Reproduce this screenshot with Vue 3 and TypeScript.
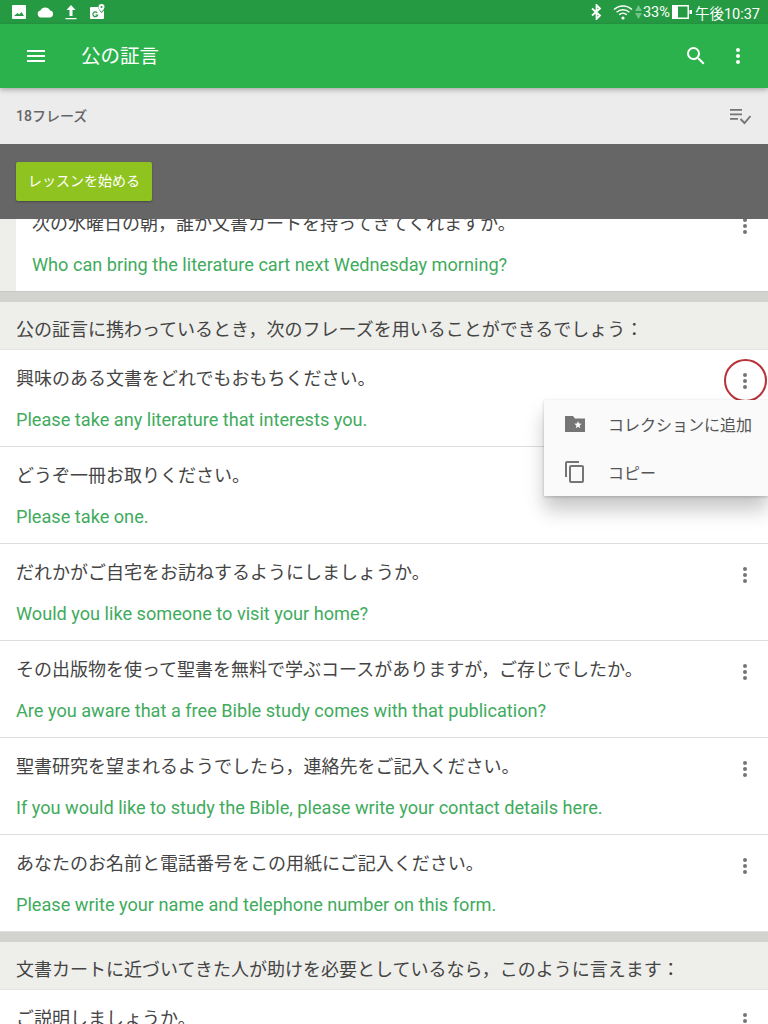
<script setup lang="ts">
interface Phrase {
  ja: string
  en: string
}

interface Section {
  title: string
  phrases: Phrase[]
}

const sections: Section[] = [
  {
    title: '公の証言に携わっているとき，次のフレーズを用いることができるでしょう：',
    phrases: [
      { ja: '興味のある文書をどれでもおもちください。', en: 'Please take any literature that interests you.' },
      { ja: 'どうぞ一冊お取りください。', en: 'Please take one.' },
      { ja: 'だれかがご自宅をお訪ねするようにしましょうか。', en: 'Would you like someone to visit your home?' },
      { ja: 'その出版物を使って聖書を無料で学ぶコースがありますが，ご存じでしたか。', en: 'Are you aware that a free Bible study comes with that publication?' },
      { ja: '聖書研究を望まれるようでしたら，連絡先をご記入ください。', en: 'If you would like to study the Bible, please write your contact details here.' },
      { ja: 'あなたのお名前と電話番号をこの用紙にご記入ください。', en: 'Please write your name and telephone number on this form.' }
    ]
  },
  {
    title: '文書カートに近づいてきた人が助けを必要としているなら，このように言えます：',
    phrases: [{ ja: 'ご説明しましょうか。', en: 'Would you like me to explain?' }]
  }
]
</script>

<template>
  <div class="app">
    <div class="status">
      <div class="status-left">
        <svg width="16" height="16" viewBox="0 0 16 16"><path fill="#fff" d="M2 1h12a1 1 0 0 1 1 1v12a1 1 0 0 1-1 1H2a1 1 0 0 1-1-1V2a1 1 0 0 1 1-1zm1 11h10l-2.6-4-2.2 2.6L6.600 9z" fill-rule="evenodd" /></svg>
        <svg width="17" height="12" viewBox="0 0 17 12"><path fill="#fff" d="M4 11.500a3.500 3.500 0 0 1-.6-6.900A5.300 5.300 0 0 1 13.100 4.600 3.500 3.500 0 0 1 13.200 11.500z" /></svg>
        <svg class="upload" width="12" height="16" viewBox="0 0 12 16"><path fill="#fff" d="M6 1l4.500 5H7.500v6h-3V6H1.500zM.5 14h11v1.200H.5z" /></svg>
        <svg class="map" width="15" height="16" viewBox="0 0 15 16">
          <path fill="#fff" d="M1 3h7.200c.3 2 1.500 4 3.300 6l2.500-2.600V14a1 1 0 0 1-1 1H1a1 1 0 0 1-1-1V4a1 1 0 0 1 1-1z" />
          <path fill="#fff" fill-rule="evenodd" d="M11.500 0A3 3 0 0 1 14.500 3c0 2-3 4.800-3 4.800S8.500 5 8.500 3a3 3 0 0 1 3-3zm0 2a1 1 0 1 0 0 2 1 1 0 0 0 0-2z" />
          <path fill="none" stroke="#259a43" stroke-width="1.200" d="M7.200 8.800a2.400 2.400 0 1 0 .4 2.200H5.400" />
        </svg>
      </div>
      <div class="status-right">
        <svg class="bt" width="11" height="16" viewBox="0 0 11 16"><path fill="none" stroke="#fff" stroke-width="1.800" d="M1 4.500l8 7L5.500 15V1L9 4.500l-8 7" /></svg>
        <svg class="wifi" width="20" height="16" viewBox="0 0 20 16"><path fill="none" stroke="#fff" stroke-width="1.500" d="M1 5.500a13 13 0 0 1 18 0M3.600 8.200a9.400 9.400 0 0 1 12.800 0M6.200 10.800a5.600 5.600 0 0 1 7.600 0" /><circle cx="10" cy="14" r="1.600" fill="#fff" /></svg>
        <svg class="updown" width="7" height="16" viewBox="0 0 7 16"><path fill="#6fc587" d="M3.500 1L7 7H0zM0 9h7l-3.500 6z" /></svg>
        <span class="pct">33%</span>
        <svg class="batt" width="20" height="14" viewBox="0 0 20 14"><path fill="#fff" d="M0 0h17v14H0zm6 1.500v11h9.500v-11zM17.500 5H20v4h-2.500z" fill-rule="evenodd" /></svg>
        <span class="clock">午後10:37</span>
      </div>
    </div>

    <header class="appbar">
      <svg class="menu-icon" width="24" height="24" viewBox="0 0 24 24"><path fill="#fff" d="M3 18h18v-2H3zm0-5h18v-2H3zm0-7v2h18V6z" /></svg>
      <h1 class="title">公の証言</h1>
      <svg class="search-icon" width="24" height="24" viewBox="0 0 24 24"><path fill="#fff" d="M15.500 14h-.79l-.28-.27A6.470 6.470 0 0 0 16 9.500 6.500 6.500 0 1 0 9.500 16c1.610 0 3.090-.59 4.230-1.570l.27.28v.79l5 4.990L20.490 19zm-6 0C7.010 14 5 11.990 5 9.500S7.010 5 9.500 5 14 7.010 14 9.500 11.990 14 9.500 14z" /></svg>
      <svg class="more-icon" width="24" height="24" viewBox="0 0 24 24"><path fill="#fff" d="M12 8a2 2 0 1 0 0-4 2 2 0 0 0 0 4zm0 2a2 2 0 1 0 0 4 2 2 0 0 0 0-4zm0 6a2 2 0 1 0 0 4 2 2 0 0 0 0-4z" /></svg>
    </header>

    <div class="subbar">
      <span class="count">18フレーズ</span>
      <svg width="24" height="24" viewBox="0 0 24 24">
        <path fill="#757575" d="M2 5h12v1.800H2zm0 4.500h12v1.800H2zM2 14h8v1.800H2z" />
        <path fill="none" stroke="#757575" stroke-width="1.900" d="M12.500 15l4 4 6-7" />
      </svg>
    </div>

    <div class="lesson-bar">
      <button class="lesson-btn">レッスンを始める</button>
    </div>

    <div class="viewport">
      <div class="list">
        <div class="phrase phrase-inset">
          <div class="phrase-text">
            <p class="ja">次の水曜日の朝，誰か文書カートを持ってきてくれますか。</p>
            <p class="en">Who can bring the literature cart next Wednesday morning?</p>
          </div>
          <svg class="kebab" width="24" height="24" viewBox="0 0 24 24"><path fill="#757575" d="M12 8a2 2 0 1 0 0-4 2 2 0 0 0 0 4zm0 2a2 2 0 1 0 0 4 2 2 0 0 0 0-4zm0 6a2 2 0 1 0 0 4 2 2 0 0 0 0-4z" /></svg>
        </div>

        <section v-for="s in sections" :key="s.title" class="section">
          <h2 class="section-title">{{ s.title }}</h2>
          <div v-for="p in s.phrases" :key="p.ja" class="phrase">
            <div class="phrase-text">
              <p class="ja">{{ p.ja }}</p>
              <p class="en">{{ p.en }}</p>
            </div>
            <svg class="kebab" width="24" height="24" viewBox="0 0 24 24"><path fill="#757575" d="M12 8a2 2 0 1 0 0-4 2 2 0 0 0 0 4zm0 2a2 2 0 1 0 0 4 2 2 0 0 0 0-4zm0 6a2 2 0 1 0 0 4 2 2 0 0 0 0-4z" /></svg>
          </div>
        </section>
      </div>

      <!-- callout round the tapped button -->
      <div class="callout"></div>

      <div class="popup">
        <div class="popup-item">
          <svg width="24" height="24" viewBox="0 0 24 24"><path fill="#757575" fill-rule="evenodd" d="M2 4h8l2 2.500h10V20H2zm13 5l-1 2.600-2.700.2 2.100 1.700-.7 2.700 2.300-1.500 2.300 1.500-.7-2.700 2.100-1.700-2.700-.2z" /></svg>
          <span>コレクションに追加</span>
        </div>
        <div class="popup-item">
          <svg width="24" height="24" viewBox="0 0 24 24"><path fill="#757575" d="M16 1H4a2 2 0 0 0-2 2v14h2V3h12zm3 4H8a2 2 0 0 0-2 2v14a2 2 0 0 0 2 2h11a2 2 0 0 0 2-2V7a2 2 0 0 0-2-2zm0 16H8V7h11z" /></svg>
          <span>コピー</span>
        </div>
      </div>
    </div>
  </div>
</template>

<style>
html,
body {
  margin: 0;
  overflow: hidden;
}
</style>

<style scoped>
.app {
  width: 768px;
  height: 1024px;
  display: flex;
  flex-direction: column;
  overflow: hidden;
  background: #fff;
  font-family: Roboto, "Noto Sans CJK JP", sans-serif;
  color: #444;
}

.status {
  height: 24px;
  flex: none;
  display: flex;
  align-items: center;
  justify-content: space-between;
  padding: 0 8px 0 11px;
  background: #259a43;
  color: #fff;
}

.status-left,
.status-right {
  display: flex;
  align-items: center;
}

.status-left {
  gap: 10px;
}

.upload {
  margin-left: 1px;
}

.map {
  margin-left: 3px;
}

.bt {
  margin-right: 11px;
}

.wifi {
  margin-right: 2px;
}

.pct {
  margin-left: 1px;
  margin-right: 2px;
  font-size: 14.500px;
}

.clock {
  font-size: 14.500px;
  margin-left: 3px;
}

.appbar {
  position: relative;
  z-index: 3;
  height: 64px;
  flex: none;
  display: flex;
  align-items: center;
  padding: 0 18px 0 24px;
  background: #2bb24c;
  box-shadow: 0 2px 5px rgba(0, 0, 0, 0.28);
  color: #fff;
}

.title {
  margin: 0 0 3px 33px;
  flex: 1;
  font-size: 19.500px;
  font-weight: 400;
}

.more-icon {
  margin-left: 18px;
}

.subbar {
  height: 56px;
  flex: none;
  display: flex;
  align-items: center;
  justify-content: space-between;
  padding: 0 16px;
  background: #ececec;
  color: #666;
  font-size: 14px;
}

.count {
  font-weight: 500;
  padding-bottom: 2px;
}

.lesson-bar {
  position: relative;
  z-index: 2;
  height: 75px;
  flex: none;
  display: flex;
  align-items: center;
  padding: 0 16px;
  background: #666;
}

.lesson-btn {
  width: 136px;
  height: 39px;
  border: 0;
  border-radius: 2px;
  background: #8fc31f;
  box-shadow: 0 1px 2px rgba(0, 0, 0, 0.3);
  color: #fff;
  font-family: inherit;
  font-size: 14px;
  padding: 0 0 3px;
}

.viewport {
  position: relative;
  flex: 1;
  overflow: hidden;
}

/* list is scrolled: first row starts under the bar */
.list {
  margin-top: -24px;
}

.phrase {
  height: 97px;
  box-sizing: border-box;
  display: flex;
  justify-content: space-between;
  padding: 16px 11px 0 16px;
  border-bottom: 1px solid #ddd;
  background: #fff;
}

.phrase-inset {
  padding-left: 32px;
  background: linear-gradient(90deg, #eeeeeb 16px, #fff 16px);
  border-bottom-color: #c9c9c5;
}

.phrase-text {
  min-width: 0;
}

.ja,
.en {
  margin: 0;
  line-height: 26px;
  white-space: nowrap;
}

.ja {
  font-size: 18px;
  color: #444;
}

.en {
  margin-top: 15px;
  font-size: 18.150px;
  color: #3fab5d;
}

.kebab {
  flex: none;
  margin-top: 3px;
}

.section {
  border-top: 10px solid #d2d3ce;
}

.section-title {
  height: 48px;
  box-sizing: border-box;
  margin: 0;
  padding: 0 16px;
  background: #eeeeeb;
  border-bottom: 1px solid #e3e3e0;
  color: #444;
  font-size: 18px;
  font-weight: 400;
  line-height: 56px;
  white-space: nowrap;
}

.callout {
  position: absolute;
  left: 724px;
  top: 140px;
  width: 39px;
  height: 39px;
  border: 2px solid #b8323a;
  border-radius: 50%;
}

.popup {
  position: absolute;
  left: 544px;
  top: 181px;
  width: 224px;
  height: 96px;
  display: flex;
  flex-direction: column;
  background: #fafafa;
  box-shadow: 0 14px 18px rgba(0, 0, 0, 0.22), 0 1px 3px rgba(0, 0, 0, 0.2);
}

.popup-item {
  flex: 1;
  display: flex;
  align-items: center;
  gap: 21px;
  padding-left: 19px;
  font-size: 16px;
  color: #555;
  white-space: nowrap;
}
</style>
